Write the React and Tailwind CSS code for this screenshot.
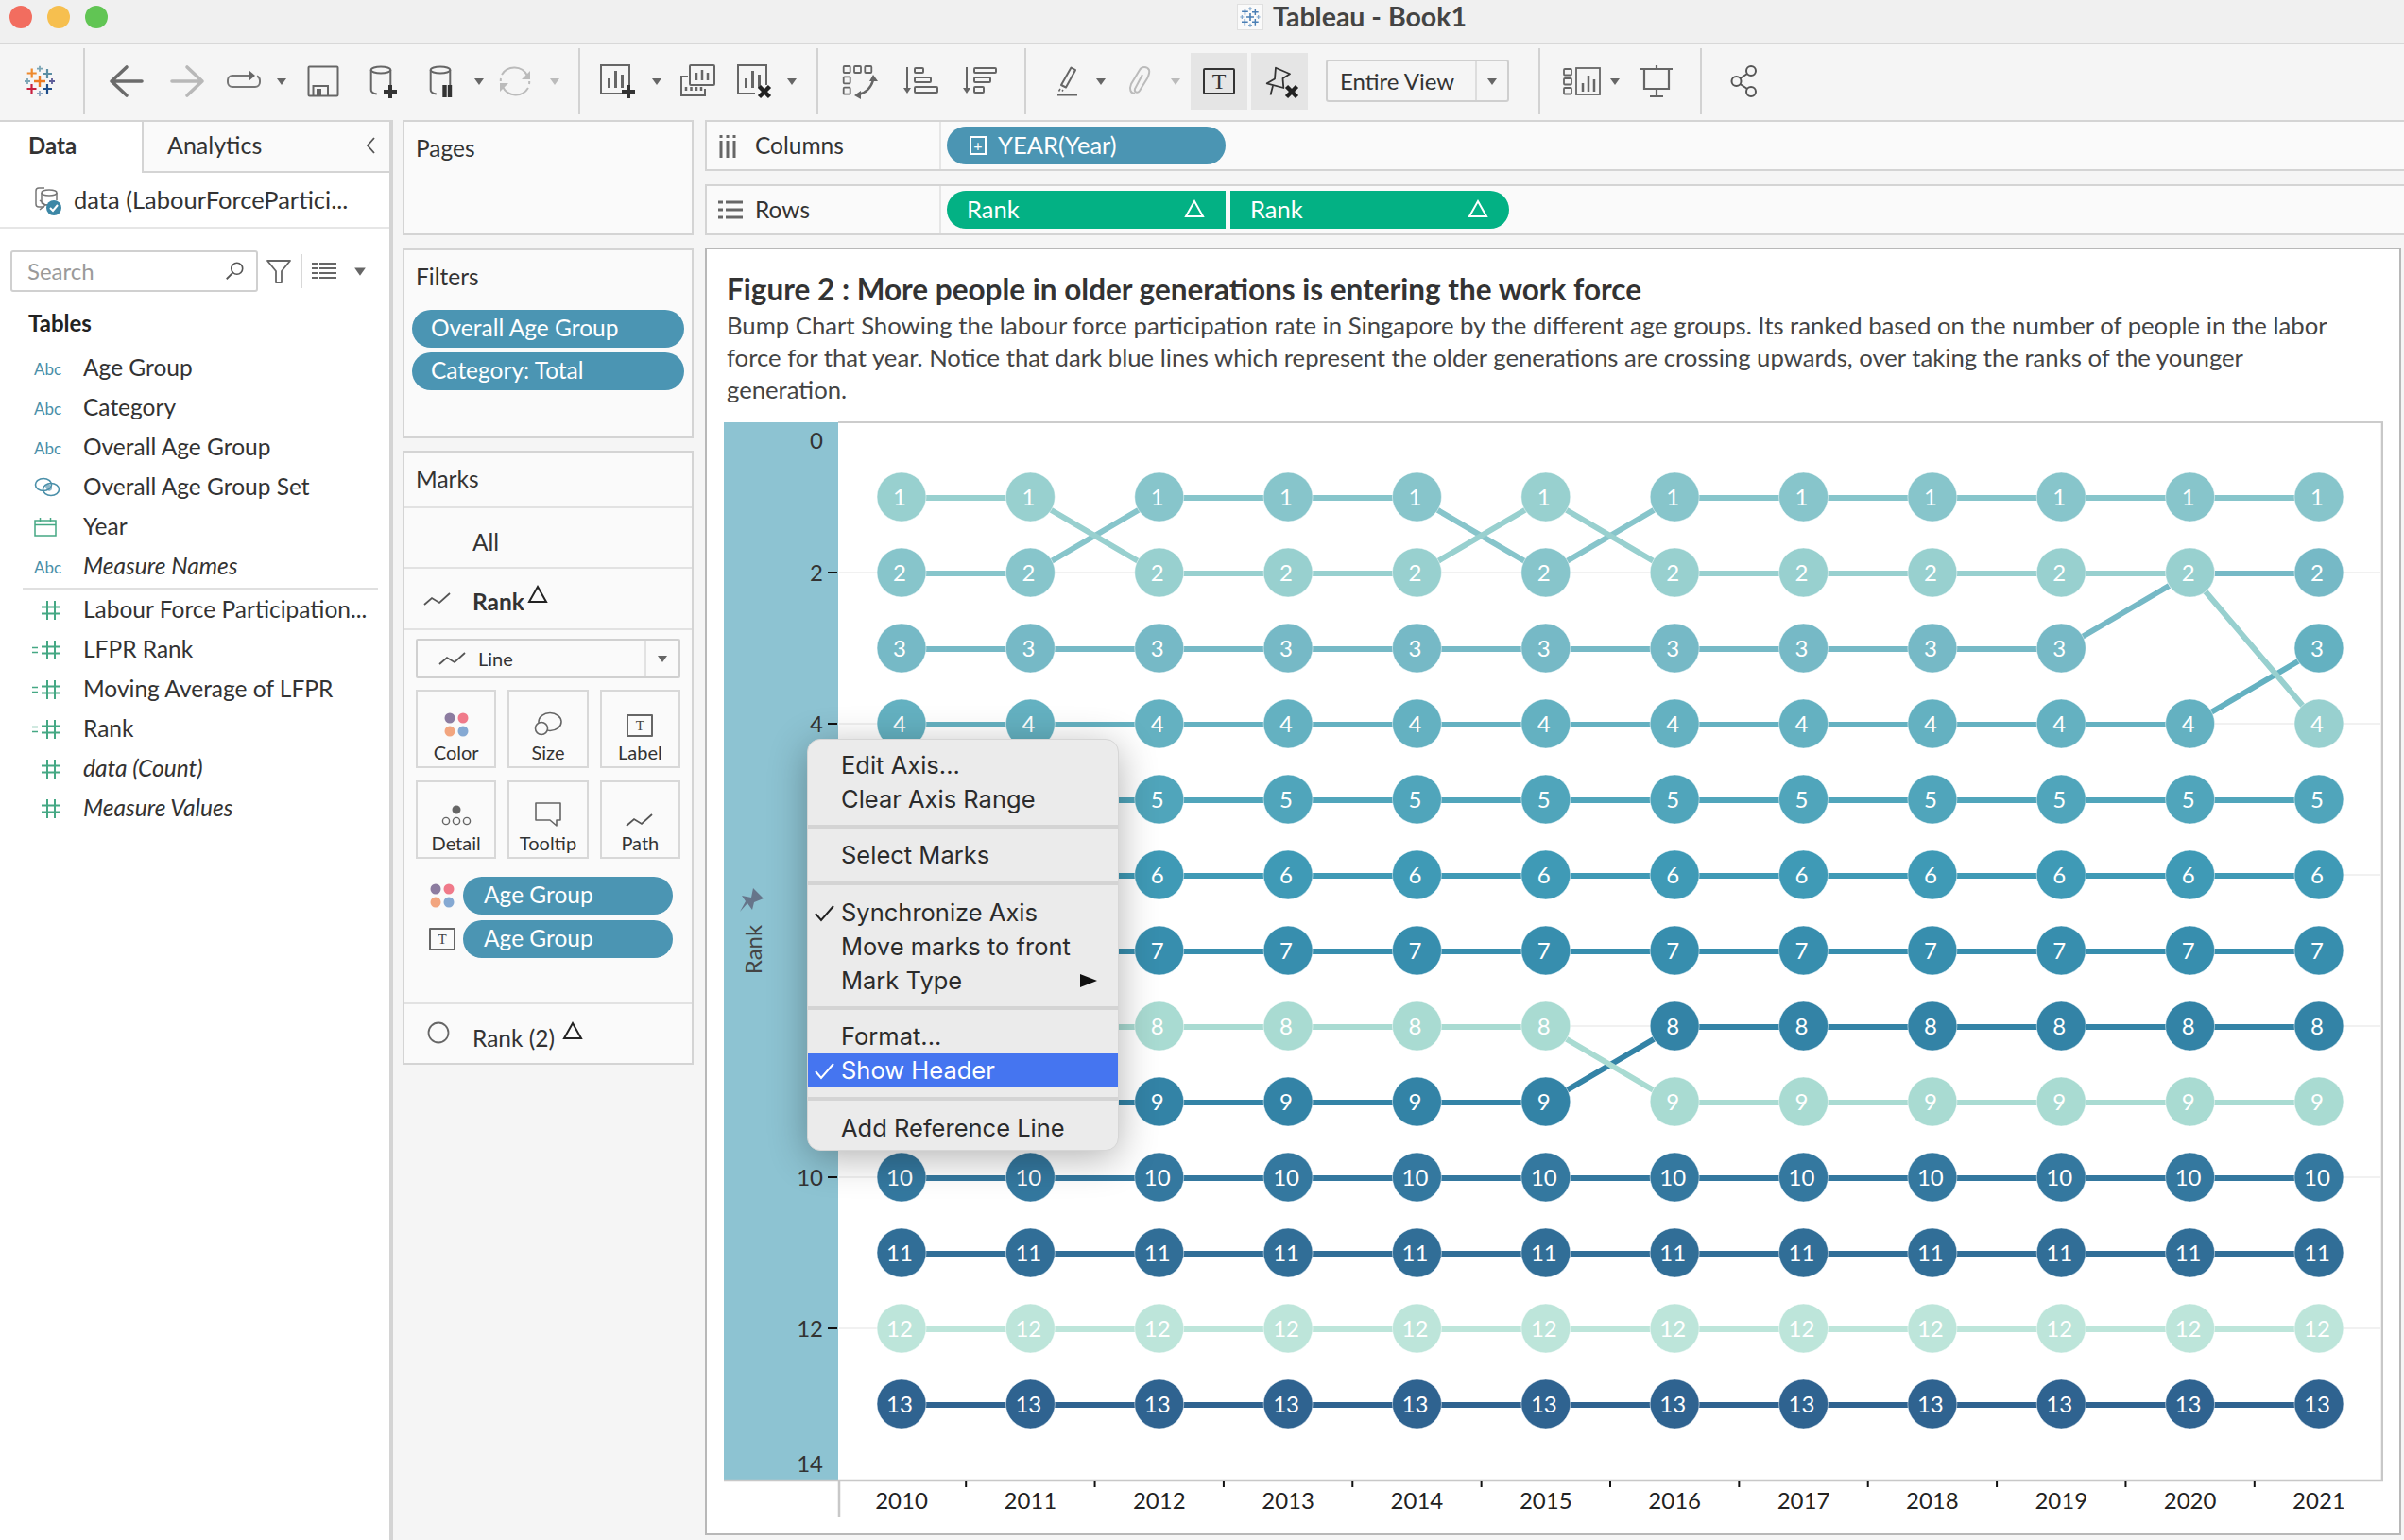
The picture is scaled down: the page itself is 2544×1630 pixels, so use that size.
import { Fragment } from "react";

const years = [2010, 2011, 2012, 2013, 2014, 2015, 2016, 2017, 2018, 2019, 2020, 2021];
const flat = (n) => years.map(() => n);

// painted last to first, so the light top series sit over the others
const series = [
	{ color: "#98d0cf", ranks: [1, 1, 2, 2, 2, 1, 2, 2, 2, 2, 2, 4] },
	{ color: "#87c5cb", ranks: [2, 2, 1, 1, 1, 2, 1, 1, 1, 1, 1, 1] },
	{ color: "#76b9c6", ranks: [3, 3, 3, 3, 3, 3, 3, 3, 3, 3, 2, 2] },
	{ color: "#64b1c1", ranks: [4, 4, 4, 4, 4, 4, 4, 4, 4, 4, 4, 3] },
	{ color: "#50a5bb", ranks: flat(5) },
	{ color: "#3f9ab6", ranks: flat(6) },
	{ color: "#378eae", ranks: flat(7) },
	{ color: "#a9dbd2", ranks: [8, 8, 8, 8, 8, 8, 9, 9, 9, 9, 9, 9] },
	{ color: "#3383a6", ranks: [9, 9, 9, 9, 9, 9, 8, 8, 8, 8, 8, 8] },
	{ color: "#34789f", ranks: flat(10) },
	{ color: "#316e97", ranks: flat(11) },
	{ color: "#bde5da", ranks: flat(12) },
	{ color: "#2f6390", ranks: flat(13) },
];

const px = (i) => 954 + i * 136.36;
const py = (r) => 446 + r * 80;
// marks sitting completely under the context menu
const underMenu = (x, y) => x > 854 && x < 1184 && y > 800 && y < 1200;

function Caret({ className = "ml-0", light }) {
	return (
		<svg viewBox="0 0 12 12" className={`w-[12px] h-[12px] shrink-0 ${className}`}>
			<path d="M1 3h10l-5 7z" fill={light ? "#bbbbbb" : "#666666"} />
		</svg>
	);
}

function Sep({ className }) {
	return <div className={`w-[2px] h-[70px] bg-[#d2d2d2] shrink-0 ${className}`} />;
}

function Ico({ className, children }) {
	return (
		<svg viewBox="0 0 40 40" fill="none" className={`w-[40px] h-[40px] shrink-0 overflow-visible ${className}`}>
			{children}
		</svg>
	);
}

function Plus({ x, y, r, color, w }) {
	return <path d={`M${x - r} ${y}H${x + r}M${x} ${y - r}V${y + r}`} stroke={color} strokeWidth={w} />;
}

function Cross({ x, y }) {
	return <path d={`M${x - 5.5} ${y - 5.5}L${x + 5.5} ${y + 5.5}M${x + 5.5} ${y - 5.5}L${x - 5.5} ${y + 5.5}`} stroke="#222" strokeWidth="4.5" />;
}

function TableauLogo({ className, small }) {
	const c = small ? ["#4a7fb5", "#4a7fb5", "#4a7fb5", "#4a7fb5", "#4a7fb5", "#7ea6cc", "#7ea6cc", "#7ea6cc", "#7ea6cc"] : ["#ee7b22", "#ee8a2e", "#5b8ea3", "#c8203f", "#1f4f8b", "#7ba5b5", "#7ba5b5", "#5d5d99", "#8ba3c0"];
	return (
		<svg viewBox="0 0 36 36" className={className}>
			<Plus x={18} y={18} r={6} color={c[0]} w={2.4} />
			<Plus x={9.7} y={9.5} r={5} color={c[1]} w={2.2} />
			<Plus x={26} y={10} r={5} color={c[2]} w={2.2} />
			<Plus x={9.5} y={26} r={5} color={c[3]} w={2.2} />
			<Plus x={26} y={26} r={5} color={c[4]} w={2.2} />
			<Plus x={18} y={4.7} r={3} color={c[5]} w={1.8} />
			<Plus x={5} y={18} r={3} color={c[6]} w={1.8} />
			<Plus x={31} y={18} r={3} color={c[7]} w={1.8} />
			<Plus x={18} y={31} r={3} color={c[8]} w={1.8} />
		</svg>
	);
}

function Cylinder() {
	return (
		<>
			<ellipse cx="18" cy="8" rx="10.3" ry="3.6" stroke="#666" strokeWidth="2" />
			<path d="M7.7 8V29q0 3.5 6 4.5M28.3 8V24" stroke="#666" strokeWidth="2" />
		</>
	);
}

function SheetBars({ x = 0 }) {
	return <path d={`M${x + 12.5} 17V27M${x + 19.5} 9V27M${x + 26.5} 13V27`} stroke="#666" strokeWidth="3" />;
}

function Toolbar() {
	return (
		<div className="flex items-center h-[80px] pb-[2px] bg-[#f5f5f5] shrink-0">
			<TableauLogo className="w-[36px] h-[36px] ml-[24px] shrink-0" />
			<Sep className="ml-[28px]" />
			<Ico className="ml-[24px]">
				<path d="M36 20H4M20 5L4 20l16 15" stroke="#6b6b6b" strokeWidth="3.6" strokeLinecap="round" strokeLinejoin="round" />
			</Ico>
			<Ico className="ml-[24px]">
				<path d="M4 20h32M20 5l16 15-16 15" stroke="#b8b8b8" strokeWidth="3.6" strokeLinecap="round" strokeLinejoin="round" />
			</Ico>
			<Ico className="ml-[20px]">
				<path d="M25 14H8a5 5 0 0 0-5 5v2a5 5 0 0 0 5 5h24a5 5 0 0 0 5-5v-2a5 5 0 0 0-3-4.5" stroke="#777" strokeWidth="2" />
				<path d="M25 8l7 6-7 6z" fill="#666" />
			</Ico>
			<Caret className="ml-[14px]" />
			<Ico className="ml-[18px]">
				<rect x="4.5" y="4.5" width="31" height="31" rx="1" stroke="#666" strokeWidth="2" />
				<path d="M9.5 35V25H25V35" stroke="#666" strokeWidth="2" />
				<rect x="13" y="28" width="5" height="7" fill="#666" />
			</Ico>
			<Ico className="ml-[23px]">
				<Cylinder />
				<Plus x={28} y={31} r={7} color="#333" w={4} />
			</Ico>
			<Ico className="ml-[23px]">
				<Cylinder />
				<path d="M22.5 24V37M28 24V37" stroke="#333" strokeWidth="4.4" />
			</Ico>
			<Caret className="ml-[13px]" />
			<Ico className="ml-[12px]">
				<path d="M6 13A15.5 15.5 0 0 1 33 14M34 27A15.5 15.5 0 0 1 7 26M4.8 20A15 15 0 0 1 5 17M35.2 20A15 15 0 0 1 35 23" stroke="#bbb" strokeWidth="2" />
				<path d="M36 9v9h-9zM4 31v-9h9z" fill="#bbb" />
			</Ico>
			<Caret className="ml-[16px]" light />
			<Sep className="ml-[19px]" />
			<Ico className="ml-[18px]">
				<path d="M26 33H4V3H34V25" stroke="#666" strokeWidth="2" />
				<SheetBars />
				<Plus x={33} y={31} r={7} color="#333" w={4} />
			</Ico>
			<Caret className="ml-[17px]" />
			<Ico className="ml-[17px]">
				<path d="M10 15H3V35H28V28" stroke="#666" strokeWidth="2" />
				<rect x="12" y="3" width="26" height="21" rx="1" stroke="#666" strokeWidth="2" />
				<path d="M19 11V19M25 8V19M31 11V19M8 26V30M13.5 26V30M19 26V30M24 26V30" stroke="#666" strokeWidth="2.5" />
			</Ico>
			<Ico className="ml-[17px]">
				<path d="M24 33H6V3H36V24" stroke="#666" strokeWidth="2" />
				<SheetBars x={2} />
				<Cross x={34} y={31} />
			</Ico>
			<Caret className="ml-[17px]" />
			<Sep className="ml-[20px]" />
			<Ico className="ml-[24px]">
				<g stroke="#666" strokeWidth="1.8">
					<rect x="2.7" y="4" width="7" height="7" rx="1" />
					<rect x="14" y="4" width="7" height="7" rx="1" />
					<rect x="25.3" y="4" width="7" height="7" rx="1" />
					<rect x="2.7" y="15.3" width="7" height="7" rx="1" />
					<rect x="2.7" y="26.7" width="7" height="7" rx="1" />
				</g>
				<path d="M18 34Q30 32 34 19" stroke="#666" strokeWidth="2.5" />
				<path d="M34 13l5 7h-9zM14 35l7-5v9z" fill="#666" />
			</Ico>
			<Ico className="ml-[23px]">
				<path d="M7 5V28" stroke="#666" strokeWidth="2" />
				<path d="M3 27h8l-4 6z" fill="#666" />
				<g stroke="#666" strokeWidth="2">
					<rect x="15" y="6" width="9" height="5" rx="1" />
					<rect x="15" y="16" width="17" height="5" rx="1" />
					<rect x="15" y="26" width="24" height="6" rx="1" />
				</g>
			</Ico>
			<Ico className="ml-[24px]">
				<path d="M6 5V28" stroke="#666" strokeWidth="2" />
				<path d="M2 27h8l-4 6z" fill="#666" />
				<g stroke="#666" strokeWidth="2">
					<rect x="14" y="6" width="23" height="5" rx="1" />
					<rect x="14" y="16" width="17" height="5" rx="1" />
					<rect x="14" y="26" width="10" height="6" rx="1" />
				</g>
			</Ico>
			<Sep className="ml-[27px]" />
			<Ico className="ml-[24px]">
				<path d="M23.5 5.5L28 8.2L18 26.5L13 24z" stroke="#666" strokeWidth="2" strokeLinejoin="round" />
				<path d="M12 28l-1.5 2.5M15 29l-1 1.5" stroke="#666" strokeWidth="1.5" />
				<rect x="9" y="33" width="21" height="2.5" fill="#666" />
			</Ico>
			<Caret className="ml-[9px]" />
			<Ico className="ml-[16px]">
				<path d="M14 33C9 33 8 28 10 23L19 8C21 4 27 4 29 8C30 11 29 13 27 17L19 30C17 33 13 32 14 28L22 13" stroke="#bbb" strokeWidth="2" />
			</Ico>
			<Caret className="ml-[11px]" light />
			<div className="w-[60px] h-[60px] ml-[10px] bg-[#e5e5e5] flex items-center justify-center shrink-0">
				<div className="w-[34px] h-[28px] border-2 border-[#333] rounded-[2px] flex items-center justify-center text-[24px] leading-none text-[#333] font-['Liberation_Serif',serif]">T</div>
			</div>
			<div className="w-[60px] h-[60px] ml-[4px] bg-[#e5e5e5] flex items-center justify-center shrink-0">
				<Ico className="">
					<path d="M16 5.7L31 12.3L23.5 17L24.3 27L6.7 22.3L15 17.5zM13 25L10.5 34.5" stroke="#333" strokeWidth="1.8" strokeLinejoin="round" />
					<Cross x={33} y={31} />
				</Ico>
			</div>
			<div className="w-[194px] h-[45px] ml-[19px] -mt-[1px] border-2 border-[#cfcfcf] rounded-[3px] flex items-center shrink-0 text-[24px] text-[#333]">
				<span className="w-[156px] pl-[13px] h-full flex items-center">Entire View</span>
				<div className="flex-1 h-full border-l-2 border-[#dddddd] flex items-center justify-center">
					<Caret className="" />
				</div>
			</div>
			<Sep className="ml-[31px]" />
			<Ico className="ml-[23px]">
				<g stroke="#666" strokeWidth="1.8">
					<rect x="2" y="7" width="8" height="6.5" rx="1" />
					<rect x="2" y="17" width="8" height="6.5" rx="1" />
					<rect x="2" y="27" width="8" height="6.5" rx="1" />
					<rect x="15" y="6" width="25" height="28" />
				</g>
				<path d="M22 22V31M28 14V31M34 18V31" stroke="#666" strokeWidth="2.5" />
			</Ico>
			<Caret className="ml-[10px]" />
			<Ico className="ml-[18px]">
				<path d="M3 7H37M20 3V7M7 8V28H33V8M20 28V36M13 36H27" stroke="#666" strokeWidth="2.2" />
			</Ico>
			<Sep className="ml-[26px]" />
			<Ico className="ml-[25px]">
				<circle cx="11.5" cy="20" r="5" stroke="#555" strokeWidth="2" />
				<circle cx="27" cy="9" r="5" stroke="#555" strokeWidth="2" />
				<circle cx="27" cy="31" r="5" stroke="#555" strokeWidth="2" />
				<path d="M15.5 17L23 12M15.5 23L23 28" stroke="#555" strokeWidth="2" />
			</Ico>
		</div>
	);
}

function HashIcon({ calc }) {
	return (
		<svg viewBox="0 0 34 20" className="w-[34px] h-[20px]">
			{calc && <path d="M1 7.5H7M1 12.5H7" stroke="#45a884" strokeWidth="1.5" />}
			<path d="M11 6.5H31M11 13.5H31M17 0V20M25 0V20" stroke="#45a884" strokeWidth="2" />
		</svg>
	);
}

function FieldIcon({ type }) {
	if (type === "abc") return <span className="text-[17px] text-[#4a8fa9] leading-none">Abc</span>;
	if (type === "set")
		return (
			<svg viewBox="0 0 28 22" className="w-[28px] h-[22px]">
				<path d="M15 7a7 7 0 0 1 4 6 8 8 0 0 1-3 2 7 7 0 0 1-4-6 8 8 0 0 1 3-2" fill="#8fb8ca" />
				<ellipse cx="10" cy="8" rx="8.5" ry="6.5" fill="none" stroke="#4a8fa9" strokeWidth="1.6" />
				<ellipse cx="18" cy="13" rx="8.5" ry="6.5" fill="none" stroke="#4a8fa9" strokeWidth="1.6" />
			</svg>
		);
	if (type === "date")
		return (
			<svg viewBox="0 0 24 20" className="w-[24px] h-[20px]">
				<path d="M1 3H23V19H1zM1 7.5H23M6.5 0V4M17.5 0V4" fill="none" stroke="#45a884" strokeWidth="1.5" />
			</svg>
		);
	return <HashIcon calc={type === "calc"} />;
}

function FieldRow({ type, italic, children }) {
	return (
		<div className="flex items-center h-[42px]">
			<div className={`w-[88px] flex ${type === "calc" || type === "hash" ? "pl-[33px]" : "pl-[36px]"} items-center`}>
				<FieldIcon type={type} />
			</div>
			<span className={`text-[24.5px] text-[#333] whitespace-nowrap -mt-[2px] ${italic ? "italic" : ""}`}>{children}</span>
		</div>
	);
}

function DataPane() {
	return (
		<div className="w-[416px] shrink-0 bg-white border-r-4 border-[#d4d4d4] border-t-2 flex flex-col">
			<div className="flex h-[54px] shrink-0">
				<div className="w-[150px] pl-[30px] pb-[4px] flex items-center text-[24px] font-bold text-[#333]">Data</div>
				<div className="flex-1 bg-[#fafafa] border-l-2 border-b-2 border-[#d4d4d4] flex items-center justify-between pl-[25px] pr-[14px] pb-[2px] text-[25px] text-[#333]">
					Analytics
					<svg viewBox="0 0 12 20" className="w-[12px] h-[20px]">
						<path d="M10 2L3 10l7 8" fill="none" stroke="#555" strokeWidth="1.8" />
					</svg>
				</div>
			</div>
			<div className="h-[59px] shrink-0 border-b-2 border-[#e6e6e6] flex items-center pl-[33px] gap-[11px]">
				<svg viewBox="0 0 34 34" className="w-[34px] h-[34px] shrink-0">
					<path d="M14 4H8a3 3 0 0 0-3 3V21a3 3 0 0 0 3 3h6" fill="none" stroke="#777" strokeWidth="1.5" />
					<ellipse cx="19" cy="9" rx="8" ry="3" fill="none" stroke="#777" strokeWidth="1.5" />
					<path d="M11 9V19q0 3 8 3M27 9V17M9 17l6 5-6 5" fill="none" stroke="#777" strokeWidth="1.5" />
					<circle cx="24" cy="25" r="8" fill="#3c87a6" />
					<path d="M20 25l3 3 5-6" fill="none" stroke="#fff" strokeWidth="2" />
				</svg>
				<span className="text-[25.5px] text-[#333] whitespace-nowrap">data (LabourForcePartici...</span>
			</div>
			<div className="flex items-center mt-[23px] pl-[11px] h-[44px] shrink-0">
				<div className="w-[262px] h-[44px] border-2 border-[#d0d0d0] rounded-[3px] flex items-center justify-between pl-[16px] pr-[12px] text-[24px] text-[#9a9a9a]">
					Search
					<svg viewBox="0 0 24 24" className="w-[22px] h-[22px]">
						<circle cx="15" cy="9" r="6.5" fill="none" stroke="#555" strokeWidth="1.8" />
						<path d="M10 14L3 21" stroke="#555" strokeWidth="2" />
					</svg>
				</div>
				<svg viewBox="0 0 28 28" className="w-[28px] h-[28px] ml-[8px]">
					<path d="M2 3H26L17 14V26H11V14z" fill="none" stroke="#666" strokeWidth="1.8" strokeLinejoin="round" />
				</svg>
				<div className="w-[2px] h-[36px] bg-[#d8d8d8] ml-[9px]" />
				<svg viewBox="0 0 26 20" className="w-[26px] h-[20px] ml-[10px]">
					<path d="M0 2h6M8 2h18M0 7h6M8 7h18M0 12h6M8 12h18M0 17h6M8 17h18" stroke="#666" strokeWidth="2" />
				</svg>
				<Caret className="ml-[18px] w-[14px] h-[14px]" />
			</div>
			<div className="h-[60px] shrink-0 flex items-center pl-[30px] pt-[6px] text-[24px] font-bold text-[#222]">Tables</div>
			<FieldRow type="abc">Age Group</FieldRow>
			<FieldRow type="abc">Category</FieldRow>
			<FieldRow type="abc">Overall Age Group</FieldRow>
			<FieldRow type="set">Overall Age Group Set</FieldRow>
			<FieldRow type="date">Year</FieldRow>
			<FieldRow type="abc" italic>Measure Names</FieldRow>
			<div className="h-[2px] bg-[#e0e0e0] ml-[24px] mr-[12px] my-[1px] shrink-0" />
			<FieldRow type="hash">Labour Force Participation...</FieldRow>
			<FieldRow type="calc">LFPR Rank</FieldRow>
			<FieldRow type="calc">Moving Average of LFPR</FieldRow>
			<FieldRow type="calc">Rank</FieldRow>
			<FieldRow type="hash" italic>data (Count)</FieldRow>
			<FieldRow type="hash" italic>Measure Values</FieldRow>
		</div>
	);
}

function Pill({ className = "", children }) {
	return <div className={`rounded-full bg-[#4b95b3] text-white text-[24.5px] pb-[2px] flex items-center whitespace-nowrap ${className}`}>{children}</div>;
}

function Delta({ className, color = "#222" }) {
	return (
		<svg viewBox="0 0 22 22" className={`w-[22px] h-[22px] shrink-0 ${className}`}>
			<path d="M11 3L20 19H2z" fill="none" stroke={color} strokeWidth="2" />
		</svg>
	);
}

function ColorDots({ className }) {
	return (
		<svg viewBox="0 0 26 26" className={`w-[26px] h-[26px] ${className}`}>
			<circle cx="6" cy="6" r="5.5" fill="#8c7ca0" />
			<circle cx="20" cy="6" r="5.5" fill="#f07a8a" />
			<circle cx="6" cy="20" r="5.5" fill="#f2a57f" />
			<circle cx="20" cy="20" r="5.5" fill="#85a9d3" />
		</svg>
	);
}

function TBox({ className }) {
	return <div className={`w-[28px] h-[24px] border-2 border-[#666] rounded-[1px] flex items-center justify-center text-[15px] leading-none text-[#444] font-['Liberation_Serif',serif] ${className}`}>T</div>;
}

function LineGlyph({ className }) {
	return (
		<svg viewBox="0 0 30 16" className={`w-[30px] h-[16px] ${className}`}>
			<path d="M1 14L9 7l8 5L28 2" fill="none" stroke="#555" strokeWidth="1.8" />
		</svg>
	);
}

function MarkCard({ icon, label }) {
	return (
		<div className="h-[83px] border-2 border-[#d8d8d8] flex flex-col items-center text-[20px] text-[#333]">
			<div className="h-[50px] flex items-end pb-[2px]">{icon}</div>
			<span className="leading-[24px] mt-[2px]">{label}</span>
		</div>
	);
}

function ShelvesColumn() {
	return (
		<div className="w-[308px] ml-[10px] shrink-0 flex flex-col text-[24.5px] text-[#333]">
			<div className="h-[122px] bg-[#fafafa] border-2 border-[#d4d4d4] pl-[12px] pt-[12px] leading-[32px] shrink-0">Pages</div>
			<div className="h-[201px] mt-[14px] bg-[#fafafa] border-2 border-[#d4d4d4] pt-[12px] shrink-0">
				<div className="pl-[12px] leading-[32px]">Filters</div>
				<div className="flex flex-col gap-[5px] mt-[19px] px-[8px]">
					<Pill className="h-[40px] pl-[20px]">Overall Age Group</Pill>
					<Pill className="h-[40px] pl-[20px]">Category: Total</Pill>
				</div>
			</div>
			<div className="h-[650px] mt-[13px] bg-[#fafafa] border-2 border-[#d4d4d4] flex flex-col shrink-0">
				<div className="h-[59px] border-b-2 border-[#e2e2e2] flex items-center pl-[12px] shrink-0">Marks</div>
				<div className="h-[64px] border-b-2 border-[#e2e2e2] flex items-center pl-[72px] pt-[10px] shrink-0">All</div>
				<div className="h-[65px] border-b-2 border-[#e2e2e2] flex items-center pl-[20px] shrink-0">
					<LineGlyph className="" />
					<span className="font-bold ml-[22px] mt-[8px]">Rank</span>
					<Delta className="ml-[3px] -mt-[10px]" />
				</div>
				<div className="px-[12px] pt-[9px] flex flex-col">
					<div className="h-[42px] border-2 border-[#d0d0d0] rounded-[2px] flex items-center text-[20px] shrink-0">
						<LineGlyph className="w-[24px] ml-[22px]" />
						<span className="ml-[12px] flex-1">Line</span>
						<div className="w-[36px] h-full border-l-2 border-[#e2e2e2] flex items-center justify-center">
							<Caret className="" />
						</div>
					</div>
					<div className="grid grid-cols-3 gap-x-[12px] gap-y-[13px] mt-[12px]">
						<MarkCard label="Color" icon={<ColorDots className="" />} />
						<MarkCard
							label="Size"
							icon={
								<svg viewBox="0 0 30 28" className="w-[30px] h-[28px]">
									<ellipse cx="17" cy="12" rx="12" ry="9.5" fill="none" stroke="#666" strokeWidth="1.6" />
									<circle cx="8" cy="19" r="6.5" fill="#fafafa" stroke="#666" strokeWidth="1.6" />
								</svg>
							}
						/>
						<MarkCard label="Label" icon={<TBox className="" />} />
						<MarkCard
							label="Detail"
							icon={
								<svg viewBox="0 0 32 24" className="w-[32px] h-[24px]">
									<circle cx="16" cy="5" r="4.5" fill="#666" />
									<circle cx="5" cy="17" r="3.6" fill="none" stroke="#666" strokeWidth="1.4" />
									<circle cx="16" cy="17" r="3.6" fill="none" stroke="#666" strokeWidth="1.4" />
									<circle cx="27" cy="17" r="3.6" fill="none" stroke="#666" strokeWidth="1.4" />
								</svg>
							}
						/>
						<MarkCard
							label="Tooltip"
							icon={
								<svg viewBox="0 0 30 28" className="w-[30px] h-[28px]">
									<path d="M2 2H28V20H24V26L17 20H2z" fill="none" stroke="#666" strokeWidth="1.6" strokeLinejoin="round" />
								</svg>
							}
						/>
						<MarkCard label="Path" icon={<LineGlyph className="" />} />
					</div>
					<div className="flex items-center mt-[19px] h-[40px]">
						<ColorDots className="ml-[15px]" />
						<Pill className="w-[222px] h-[40px] pl-[22px] ml-[9px]">Age Group</Pill>
					</div>
					<div className="flex items-center mt-[6px] h-[40px]">
						<TBox className="ml-[14px]" />
						<Pill className="w-[222px] h-[40px] pl-[22px] ml-[8px]">Age Group</Pill>
					</div>
				</div>
				<div className="mt-auto h-[64px] border-t-2 border-[#e2e2e2] flex items-center pl-[24px] shrink-0">
					<svg viewBox="0 0 24 24" className="w-[24px] h-[24px] -mt-[2px]">
						<circle cx="12" cy="12" r="10.5" fill="none" stroke="#666" strokeWidth="1.8" />
					</svg>
					<span className="ml-[24px] mt-[10px]">Rank (2)</span>
					<Delta className="ml-[8px] -mt-[6px]" />
				</div>
			</div>
		</div>
	);
}

function ShelfBar({ className, icon, label, children }) {
	return (
		<div className={`h-[54px] bg-[#fafafa] border-y-2 border-l-2 border-[#d4d4d4] flex shrink-0 text-[24.5px] text-[#333] ${className}`}>
			<div className="w-[248px] border-r-2 border-[#e6e6e6] flex items-center pl-[12px] shrink-0">
				<div className="w-[39px] shrink-0">{icon}</div>
				<span>{label}</span>
			</div>
			<div className="flex items-center pl-[6px] gap-[5px]">{children}</div>
		</div>
	);
}

function RankPill() {
	return (
		<div className="w-[295px] h-[40px] bg-[#03b184] text-white text-[25.5px] pb-[2px] flex items-center justify-between pl-[21px] pr-[22px] first:rounded-l-full last:rounded-r-full">
			Rank
			<Delta className="" color="#fff" />
		</div>
	);
}

function BumpChart() {
	return (
		<svg viewBox="766 446 1756 1160" className="w-[1756px] h-[1160px] ml-[18px] mt-[17px] shrink-0 font-['Lato',sans-serif]">
			<rect x="766" y="447" width="121" height="1119" fill="#8dc3d2" />
			<path d="M887 447H2522" stroke="#cccccc" strokeWidth="2" />
			<path d="M2521 447V1567M766 1567H2522M888 1568V1606" stroke="#c8c8c8" strokeWidth="2.5" />
			{[2, 4, 6, 8, 10, 12].map((r) => (
				<path key={r} d={`M888 ${py(r)}H2520`} stroke="#f1f1f1" strokeWidth="2" />
			))}
			{[0, 2, 4, 6, 8, 10, 12, 14].map((r) => {
				const y = r === 0 ? 466 : r === 14 ? 1549 : py(r);
				const hidden = r >= 6 && r <= 8;
				return (
					<Fragment key={r}>
						{r > 0 && r < 14 && !hidden && <path d={`M876 ${y}H886`} stroke="#111" strokeWidth="2" />}
						{!hidden && <text x="871" y={y + 9} textAnchor="end" fontSize="24" fill="#333">{r}</text>}
					</Fragment>
				);
			})}
			<path d="M785 948L795 950L797 940L808 951L798 955L796 963L791 956L783 965L789 954z" fill="#66758a" />
			<text transform="translate(806 1005) rotate(-90)" textAnchor="middle" fontSize="24" fill="#444">Rank</text>
			{years.map((year, i) => (
				<Fragment key={year}>
					<text x={px(i)} y="1597" textAnchor="middle" fontSize="24" fill="#222">{year}</text>
					{i < 11 && <path d={`M${px(i) + 68.2} 1568V1574`} stroke="#111" strokeWidth="2" />}
				</Fragment>
			))}
			{[...series].reverse().map((s) => (
				<Fragment key={s.color}>
					<polyline fill="none" stroke={s.color} strokeWidth="6" points={s.ranks.map((r, i) => `${px(i)},${py(r) + 1}`).join(" ")} />
					{s.ranks.map((r, i) =>
						underMenu(px(i), py(r)) ? null : (
							<Fragment key={i}>
								<circle cx={px(i)} cy={py(r)} r="26" fill={s.color} stroke="#ffffff" strokeOpacity="0.5" />
								<text x={px(i) - 2} y={py(r) + 9} textAnchor="middle" fontSize="24" fill="#ffffff">{r}</text>
							</Fragment>
						),
					)}
				</Fragment>
			))}
		</svg>
	);
}

function MenuItem({ checked, active, arrow, children }) {
	return (
		<div className={`h-[36px] pl-[35px] flex items-center relative ${active ? "bg-[#4575f0] text-white" : ""}`}>
			{checked && (
				<svg viewBox="0 0 24 20" className="w-[24px] h-[20px] absolute left-[6px] top-[9px]">
					<path d="M2 10l6 7L21 2" fill="none" stroke={active ? "#fff" : "#222"} strokeWidth="2" />
				</svg>
			)}
			{children}
			{arrow && (
				<svg viewBox="0 0 18 14" className="w-[18px] h-[14px] absolute right-[22px] top-[11px]">
					<path d="M0 0L18 7L0 14z" fill="#111" />
				</svg>
			)}
		</div>
	);
}

function ContextMenu() {
	return (
		<div className="absolute left-[854px] top-[782px] w-[330px] h-[436px] pt-[9px] bg-[#ebebeb] border border-[#d6d6d6] rounded-[14px] shadow-[0_8px_40px_rgba(0,0,0,0.3)] text-[25.5px] text-[#2b2b2b] font-['Inter',sans-serif] overflow-hidden">
			<MenuItem>Edit Axis...</MenuItem>
			<MenuItem>Clear Axis Range</MenuItem>
			<div className="h-[4px] bg-[#d4d4d4] mt-[9px] mb-[10px]" />
			<MenuItem>Select Marks</MenuItem>
			<div className="h-[4px] bg-[#d4d4d4] mt-[10px] mb-[11px]" />
			<MenuItem checked>Synchronize Axis</MenuItem>
			<MenuItem>Move marks to front</MenuItem>
			<MenuItem arrow>Mark Type</MenuItem>
			<div className="h-[4px] bg-[#d4d4d4] mt-[9px] mb-[10px]" />
			<MenuItem>Format...</MenuItem>
			<MenuItem checked active>Show Header</MenuItem>
			<div className="h-[4px] bg-[#d4d4d4] mt-[10px] mb-[11px]" />
			<MenuItem>Add Reference Line</MenuItem>
		</div>
	);
}

export default function App() {
	return (
		<div className="relative w-[2544px] h-[1630px] overflow-hidden bg-[#f5f5f5] font-['Lato',sans-serif]">
			<div className="h-[47px] pb-[10px] bg-[#f0f0f0] border-b-2 border-[#d8d8d8] flex items-center pl-[10px] gap-[16px] shrink-0">
				<div className="w-[24px] h-[24px] rounded-full bg-[#f26d5f]" />
				<div className="w-[24px] h-[24px] rounded-full bg-[#f6bf4f]" />
				<div className="w-[24px] h-[24px] rounded-full bg-[#61c554]" />
				<div className="flex items-center ml-[1179px] gap-[10px]">
					<div className="w-[28px] h-[28px] bg-[#fafafa] border border-[#e0e0e0] flex items-center justify-center">
						<TableauLogo className="w-[24px] h-[24px]" small />
					</div>
					<span className="text-[28.5px] font-bold text-[#444] leading-none">Tableau - Book1</span>
				</div>
			</div>
			<Toolbar />
			<div className="flex h-[1503px]">
				<DataPane />
				<ShelvesColumn />
				<div className="flex-1 ml-[12px] flex flex-col min-w-0">
					<ShelfBar
						label="Columns"
						icon={
							<svg viewBox="0 0 20 26" className="w-[20px] h-[26px]">
								<path d="M3 8V26M10 8V26M17 8V26" stroke="#666" strokeWidth="3" />
								<path d="M3 2V5M10 2V5M17 2V5" stroke="#666" strokeWidth="3" />
							</svg>
						}
					>
						<Pill className="w-[295px] h-[40px] pl-[24px] text-[25.5px]">
							<span className="w-[18px] h-[20px] border-2 border-white flex items-center justify-center text-[16px] leading-none mr-[12px] mt-[2px]">+</span>
							YEAR(Year)
						</Pill>
					</ShelfBar>
					<ShelfBar
						className="mt-[14px]"
						label="Rows"
						icon={
							<svg viewBox="0 0 26 22" className="w-[26px] h-[22px] shrink-0">
								<path d="M0 3H5M8 3H26M0 11H5M8 11H26M0 19H5M8 19H26" stroke="#666" strokeWidth="3" />
							</svg>
						}
					>
						<div className="flex gap-[5px]">
							<RankPill />
							<RankPill />
						</div>
					</ShelfBar>
					<div className="mt-[13px] h-[1363px] mr-[3px] bg-white border-2 border-[#b8b8b8] flex flex-col shrink-0">
						<div className="pl-[21px] pt-[24px] text-[#333]">
							<div className="text-[31.5px] leading-[36px] font-bold whitespace-nowrap">Figure 2 : More people in older generations is entering the work force</div>
							<div className="text-[25.7px] leading-[34px] mt-[3px] whitespace-nowrap text-[#444]">
								<div>Bump Chart Showing the labour force participation rate in Singapore by the different age groups. Its ranked based on the number of people in the labor</div>
								<div>force for that year. Notice that dark blue lines which represent the older generations are crossing upwards, over taking the ranks of the younger</div>
								<div>generation.</div>
							</div>
						</div>
						<BumpChart />
					</div>
				</div>
			</div>
			<ContextMenu />
		</div>
	);
}
